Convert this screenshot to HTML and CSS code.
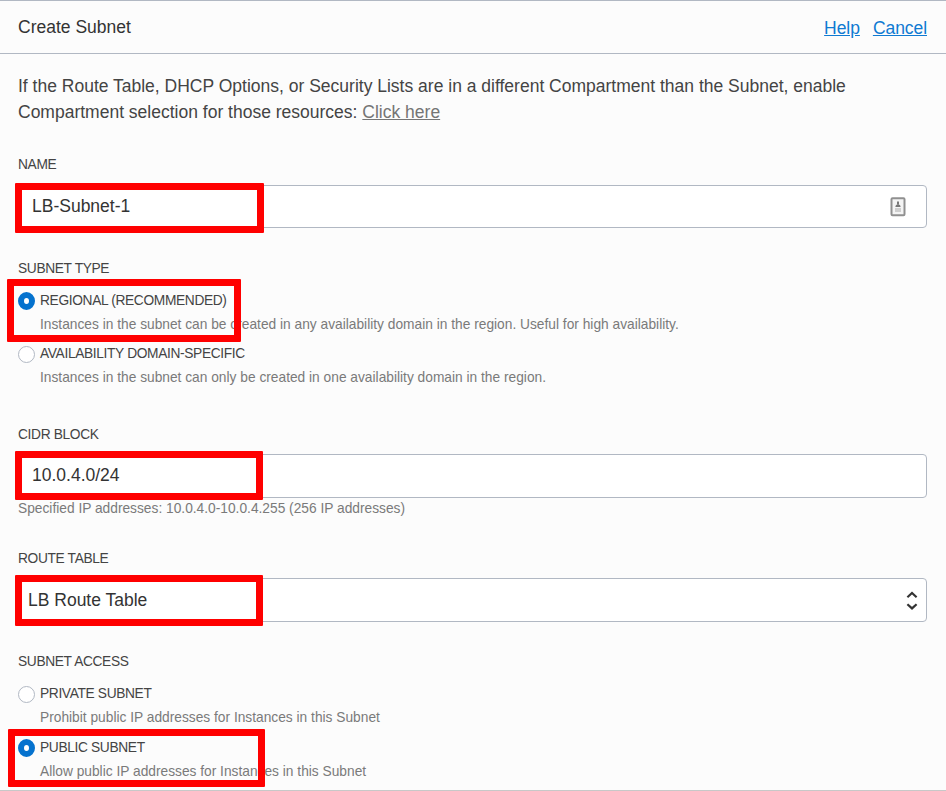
FILE: index.html
```html
<!DOCTYPE html>
<html lang="en">
<head>
<meta charset="utf-8">
<title>Create Subnet</title>
<link rel="stylesheet" href="styles.css">
</head>
<body>
<div class="dialog">
  <header class="header">
    <h1 class="title"><span>Create Subnet</span></h1>
    <nav class="actions"><a class="link">Help</a><a class="link">Cancel</a></nav>
  </header>
  <main class="body">
    <p class="intro"><span>If the Route Table, DHCP Options, or Security Lists are in a different Compartment than the Subnet, enable</span><br><span>Compartment selection for those resources: <a class="more">Click here</a></span></p>

    <section class="field name">
      <div class="label"><span>NAME</span></div>
      <div class="input"><span class="value">LB-Subnet-1</span>
        <svg class="card-icon" width="18" height="22" viewBox="0 0 18 22"><rect x="2.5" y="2.3" width="13" height="17" rx="1" fill="#f4f4f4" stroke="#909090" stroke-width="2"/><path d="M9 5.4v3" stroke="#777" stroke-width="2"/><path d="M6.4 11c0-3.6 5.2-3.6 5.2 0z" fill="#777"/><path d="M6 13h6M6 15h6" stroke="#aaa" stroke-width="1.2"/></svg>
      </div>
      <i class="mark"></i>
    </section>

    <section class="field type">
      <div class="label"><span>SUBNET TYPE</span></div>
      <div class="option chosen"><i class="radio on"></i><div><div class="option-name"><span>REGIONAL (RECOMMENDED)</span></div><div class="hint"><span>Instances in the subnet can be created in any availability domain in the region. Useful for high availability.</span></div></div><i class="mark"></i></div>
      <div class="option"><i class="radio"></i><div><div class="option-name"><span>AVAILABILITY DOMAIN-SPECIFIC</span></div><div class="hint"><span>Instances in the subnet can only be created in one availability domain in the region.</span></div></div></div>
    </section>

    <section class="field cidr">
      <div class="label"><span>CIDR BLOCK</span></div>
      <div class="input"><span class="value">10.0.4.0/24</span></div>
      <div class="hint"><span>Specified IP addresses: 10.0.4.0-10.0.4.255 (256 IP addresses)</span></div>
      <i class="mark"></i>
    </section>

    <section class="field route">
      <div class="label"><span>ROUTE TABLE</span></div>
      <div class="input"><span class="value">LB Route Table</span>
        <svg class="sort-icon" width="14" height="20" viewBox="0 0 14 20"><path d="M2.4 7.2 7 3l4.6 4.2M2.4 14.2 7 18.4l4.6-4.2" fill="none" stroke="#333" stroke-width="2.2"/></svg>
      </div>
      <i class="mark"></i>
    </section>

    <section class="field access">
      <div class="label"><span>SUBNET ACCESS</span></div>
      <div class="option"><i class="radio"></i><div><div class="option-name"><span>PRIVATE SUBNET</span></div><div class="hint"><span>Prohibit public IP addresses for Instances in this Subnet</span></div></div></div>
      <div class="option chosen"><i class="radio on"></i><div><div class="option-name"><span>PUBLIC SUBNET</span></div><div class="hint"><span>Allow public IP addresses for Instances in this Subnet</span></div></div><i class="mark"></i></div>
    </section>
  </main>
</div>
</body>
</html>
```
FILE: styles.css
```css
* { box-sizing: border-box; }
body { margin: 0; background: #fcfcfc; font-family: "Liberation Sans", Arial, sans-serif; color: #444; }
.dialog { height: 791px; overflow: hidden; border-top: 1px solid #b1b8c3; border-bottom: 1px solid #c8c8c8; }
.header { height: 53px; padding: 0 19px 0 18px; display: flex; align-items: center; justify-content: space-between; border-bottom: 1px solid #b1b8c3; }
.title { margin: 0; font-size: 17.5px; font-weight: 400; line-height: 26px; color: #333; }
.actions { display: flex; gap: 13px; padding-top: 2px; }
.link { font-size: 17.5px; line-height: 26px; letter-spacing: -0.06px; color: #0f7ad2; text-decoration: underline; }
.body { padding: 19px 19px 0 18px; }
.intro { margin: 0 0 29px; font-size: 17.5px; line-height: 26px; white-space: nowrap; }
.more { color: #757575; text-decoration: underline; }
.field { position: relative; }
.label { font-size: 13.75px; line-height: 22px; letter-spacing: -0.35px; }
.input { display: flex; align-items: center; justify-content: space-between; background: #fff; border: 1px solid #b1b8c3; border-radius: 4px; height: 44px; padding: 0 13px; }
.value { font-size: 17.5px; line-height: 26px; color: #333; }
.hint { font-size: 13.75px; line-height: 22px; color: #7a7a7a; white-space: nowrap; }
.option { position: relative; display: flex; gap: 5px; height: 53px; }
.option-name { font-size: 13.75px; line-height: 22px; letter-spacing: -0.35px; margin-bottom: 2px; }
.radio { width: 17px; height: 17px; margin-top: 3px; border: 1px solid #b1b8c3; border-radius: 50%; background: #fff; }
.radio.on { height: 18px; margin-top: 2px; border: 6.5px solid #0572ce; }
.mark { position: absolute; border: 7px solid #f00; border-radius: 1px; }
.name .label { margin-bottom: 9px; }
.name .input { height: 43px; }
.name .value, .cidr .value { padding-bottom: 2px; }
.name .mark { left: -3px; top: 29px; width: 249px; height: 50px; }
.type { margin-top: 30px; }
.type .label { margin-bottom: 10px; }
.type .mark { left: -11px; top: -11px; width: 234px; height: 63px; }
.card-icon { margin-right: 6px; }
.cidr { margin-top: 28px; }
.cidr .label, .route .label { margin-bottom: 8px; }
.cidr .mark { left: -3px; top: 27px; width: 248px; height: 49px; }
.route { margin-top: 28px; }
.route .input { padding: 0 7px 0 9px; }
.route .mark { left: -3px; top: 27px; width: 248px; height: 51px; }
.access { margin-top: 29px; }
.access .label { margin-bottom: 10px; }
.access .option { height: 54px; }
.access .mark { left: -10px; top: -8px; width: 257px; height: 58px; }
```
